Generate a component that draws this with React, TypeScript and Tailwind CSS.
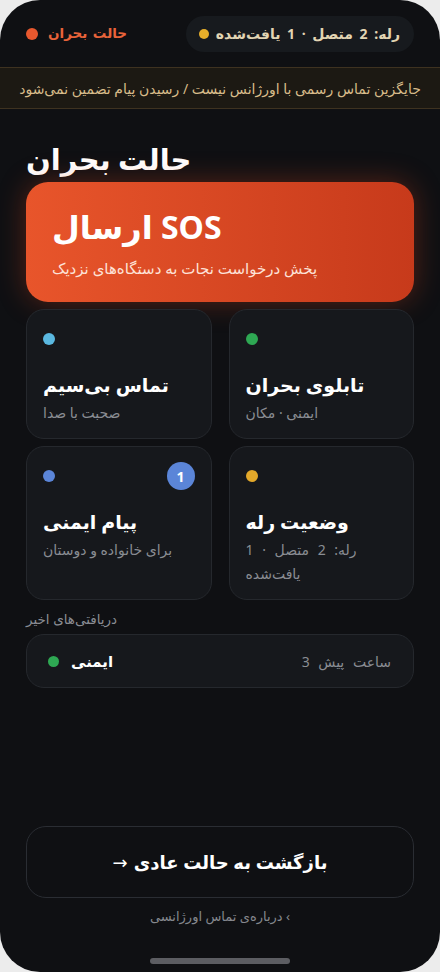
import React from 'react';

const font = { fontFamily: '"Noto Sans", "DejaVu Sans", sans-serif' };

interface Tile {
  title: string;
  sub: string;
  dot: string;
  badge?: number;
  wide?: boolean;
}

const tiles: Tile[] = [
  { title: 'تماس بی‌سیم', sub: 'صحبت با صدا', dot: 'bg-[#5ab8e0]' },
  { title: 'تابلوی بحران', sub: 'ایمنی · مکان', dot: 'bg-[#2ea853]' },
  { title: 'پیام ایمنی', sub: 'برای خانواده و دوستان', dot: 'bg-[#5b85d8]', badge: 1 },
  { title: 'وضعیت رله', sub: 'رله: 2 متصل · 1 یافت‌شده', dot: 'bg-[#e3a82a]', wide: true },
];

function TileCard({ tile }: { tile: Tile }) {
  return (
    <div className="h-full rounded-[18px] border border-[#25282d] bg-[#16181c] px-[16px] pt-[15px] pb-[13px] flex flex-col">
      <div className="h-7 flex items-center justify-between">
        <span className={`w-3 h-3 rounded-full ${tile.dot}`} />
        {tile.badge && (
          <span className="w-7 h-7 rounded-full bg-[#5b85d8] text-white text-[14px] font-bold flex items-center justify-center">
            {tile.badge}
          </span>
        )}
      </div>
      <div className="mt-[18px] text-[19px] leading-[28px] font-bold text-white">{tile.title}</div>
      <div className={`mt-[2px] text-[14px] leading-[24px] text-[#8a8d93] pr-4 ${tile.wide ? 'pr-6 [word-spacing:5px]' : ''}`}>
        {tile.sub}
      </div>
    </div>
  );
}

export default function App() {
  return (
    <div className="min-h-screen bg-[#ececec]" style={font}>
      <div className="w-[440px] h-[972px] rounded-[40px] bg-[#0f1013] overflow-hidden flex flex-col relative">
        {/* top status */}
        <div className="h-[67px] flex items-center justify-between pl-[26px] pr-[26px]">
          <div className="flex items-center gap-[10px]">
            <span className="w-3 h-3 rounded-full bg-[#e8582e]" />
            <span className="text-[13.5px] font-bold text-[#e8633a] [word-spacing:2px]">حالت بحران</span>
          </div>
          <div className="h-9 rounded-full bg-[#171a1e] flex items-center gap-[7px] pl-[13px] pr-[14px]">
            <span className="w-[10px] h-[10px] rounded-full bg-[#e6ae2a]" />
            <span className="text-[14px] font-bold text-[#e2d5b3] [word-spacing:3px]">رله: 2 متصل · 1 یافت‌شده</span>
          </div>
        </div>

        {/* warning banner */}
        <div className="h-[42px] border-y border-[#3e3220] bg-[#1c1913] flex items-center justify-center">
          <span className="text-[14px] text-[#d8bc8a]" dir="rtl">
            جایگزین تماس رسمی با اورژانس نیست / رسیدن پیام تضمین نمی‌شود
          </span>
        </div>

        <div className="px-[26px] flex flex-col">
          <h1 className="mt-[30px] text-[29px] leading-[40px] font-bold text-white">حالت بحران</h1>

          {/* SOS */}
          <div className="mt-[3px] h-[120px] rounded-[22px] bg-gradient-to-r from-[#e8552b] to-[#c73a1b] shadow-[0_0_28px_rgba(220,70,30,0.35)] px-[26px] flex flex-col justify-center">
            <div className="text-[32px] leading-[42px] font-bold text-white">ارسال SOS</div>
            <div className="mt-[10px] text-[15px] leading-[20px] text-[#fde2d8]">پخش درخواست نجات به دستگاه‌های نزدیک</div>
          </div>

          {/* tiles */}
          <div className="mt-[7px] grid grid-cols-2 gap-x-[17px] gap-y-[7px]" dir="rtl">
            {[tiles[1], tiles[0], tiles[3], tiles[2]].map((t) => (
              <div key={t.title} dir="ltr">
                <TileCard tile={t} />
              </div>
            ))}
          </div>

          <div className="mt-[8px] text-[13.5px] leading-[22px] text-[#8a8d93]">دریافتی‌های اخیر</div>

          <div className="mt-[4px] h-[54px] rounded-[18px] border border-[#25282d] bg-[#16181c] flex items-center justify-between pl-[21px] pr-[22px]">
            <div className="flex items-center gap-[12px]">
              <span className="w-[11px] h-[11px] rounded-full bg-[#2ea853]" />
              <span className="text-[15px] font-bold text-white">ایمنی</span>
            </div>
            <span className="text-[14px] text-[#8a8d93] [word-spacing:5px]">3 ساعت پیش</span>
          </div>
        </div>

        <div className="flex-1" />

        <div className="px-[26px]">
          <button className="w-full h-[72px] rounded-[20px] border border-[#2a2d33] bg-[#0f1013] text-[18px] font-bold text-white flex items-center justify-center" dir="rtl">
            بازگشت به حالت عادی <span className="font-normal mr-[6px]">→</span>
          </button>
          <div className="mt-[7px] text-center text-[13px] leading-[22px] text-[#85888e]" dir="rtl">
            › درباره‌ی تماس اورژانسی
          </div>
        </div>

        <div className="h-[45px] flex items-end justify-center pb-[8px]">
          <span className="w-[140px] h-[6px] rounded-full bg-[#5c5d62]" />
        </div>
      </div>
    </div>
  );
}
